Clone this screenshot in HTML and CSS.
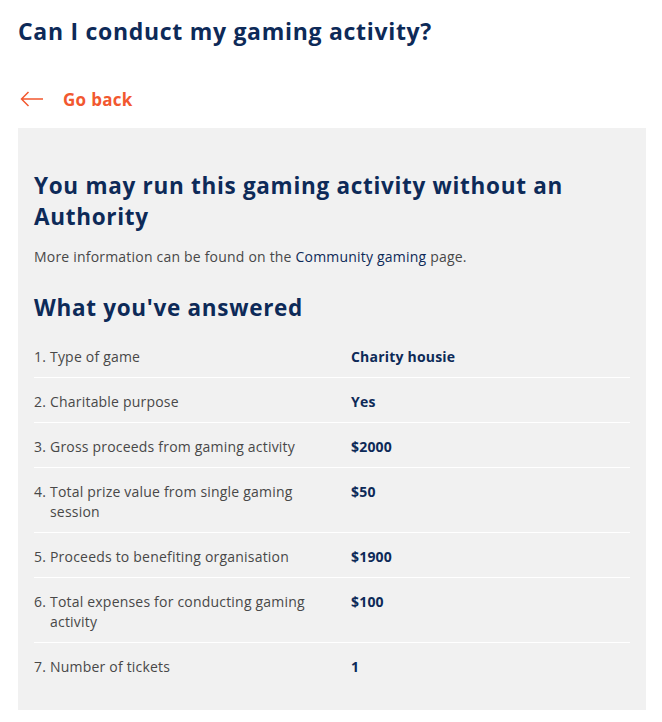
FILE: index.html
```html
<!DOCTYPE html>
<html lang="en">
<head>
<meta charset="utf-8">
<title>Can I conduct my gaming activity?</title>
<link rel="stylesheet" href="styles.css">
</head>
<body>
<main class="page">
  <h1 class="title">Can I conduct my gaming activity?</h1>
  <a class="back" href="#">
    <svg class="back-icon" width="24" height="16" viewBox="0 0 24 16" aria-hidden="true">
      <path d="M23 8H1.5M8.5 1L1.5 8l7 7" fill="none" stroke="currentColor" stroke-width="1.5"/>
    </svg>
    <span>Go back</span>
  </a>
  <section class="panel">
    <h2 class="result">You may run this gaming activity without an Authority</h2>
    <p class="info">More information can be found on the <a href="#" class="link">Community gaming</a> page.</p>
    <h2 class="answers-title">What you've answered</h2>
    <ol class="answers">
      <li class="row"><span class="num">1.</span><span class="q">Type of game</span><span class="a">Charity housie</span></li>
      <li class="row"><span class="num">2.</span><span class="q">Charitable purpose</span><span class="a">Yes</span></li>
      <li class="row"><span class="num">3.</span><span class="q">Gross proceeds from gaming activity</span><span class="a">$2000</span></li>
      <li class="row"><span class="num">4.</span><span class="q">Total prize value from single gaming session</span><span class="a">$50</span></li>
      <li class="row"><span class="num">5.</span><span class="q">Proceeds to benefiting organisation</span><span class="a">$1900</span></li>
      <li class="row"><span class="num">6.</span><span class="q">Total expenses for conducting gaming activity</span><span class="a">$100</span></li>
      <li class="row"><span class="num">7.</span><span class="q">Number of tickets</span><span class="a">1</span></li>
    </ol>
  </section>
</main>
</body>
</html>
```

FILE: styles.css
```css
* { box-sizing: border-box; }
html, body { margin: 0; padding: 0; background: #fff; }
body {
  font-family: "Open Sans", "Liberation Sans", sans-serif;
  color: #484848;
}
.page {
  padding: 16px 16px 12px 18px;
}
.title {
  margin: 0;
  font-size: 23px;
  letter-spacing: 0.7px;
  line-height: 31px;
  font-weight: 700;
  color: #0d2a58;
}
.back {
  display: flex;
  align-items: center;
  gap: 19px;
  margin-top: 37px;
  padding-left: 2px;
  height: 30px;
  color: #f2582f;
  text-decoration: none;
  font-weight: 700;
  font-size: 17px;
  letter-spacing: 0.3px;
}
.back-icon { display: block; }
.panel {
  margin-top: 14px;
  width: 628px;
  background: #f1f1f1;
  padding: 42px 16px 23px 16px;
}
.result {
  margin: 0;
  font-size: 22.5px;
  letter-spacing: 0.7px;
  line-height: 31px;
  font-weight: 700;
  color: #0d2a58;
}
.info {
  margin: 15px 0 0;
  font-size: 14px;
  letter-spacing: 0.2px;
  line-height: 20px;
  color: #484848;
}
.link { color: #0d2a58; text-decoration: none; }
.answers-title {
  margin: 25px 0 0;
  font-size: 22.5px;
  letter-spacing: 0.7px;
  line-height: 31px;
  font-weight: 700;
  color: #0d2a58;
}
.answers {
  list-style: none;
  margin: 10px 0 0;
  padding: 0;
  width: 596px;
}
.row {
  display: grid;
  grid-template-columns: 16px 301px 1fr;
  padding: 14px 0 10px;
  border-bottom: 1px solid #ffffff;
  font-size: 14px;
  letter-spacing: 0.2px;
  line-height: 20px;
}
.row:last-child { border-bottom: none; }
.q { padding-right: 16px; }
.a { color: #0d2a58; font-weight: 700; }
```
